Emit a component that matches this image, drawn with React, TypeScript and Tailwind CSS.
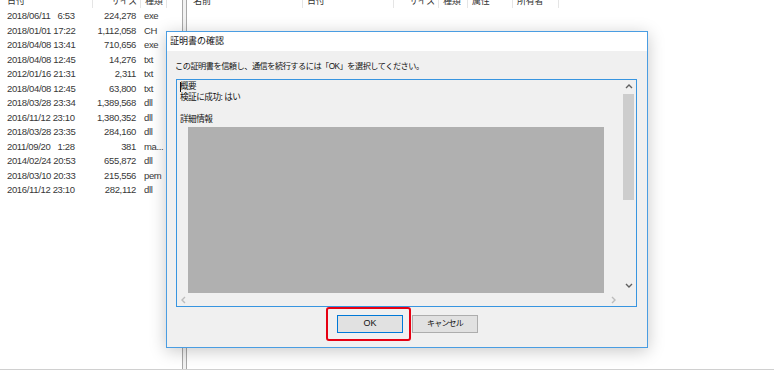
import React from "react";

const font = "font-['Liberation_Sans','Noto_Sans_CJK_JP',sans-serif]";

const files: [string, string, string][] = [
  ["2018/06/11", "6:53", "224,278", "exe"],
  ["2018/01/01", "17:22", "1,112,058", "CH"],
  ["2018/04/08", "13:41", "710,656", "exe"],
  ["2018/04/08", "12:45", "14,276", "txt"],
  ["2012/01/16", "21:31", "2,311", "txt"],
  ["2018/04/08", "12:45", "63,800", "txt"],
  ["2018/03/28", "23:34", "1,389,568", "dll"],
  ["2016/11/12", "23:10", "1,380,352", "dll"],
  ["2018/03/28", "23:35", "284,160", "dll"],
  ["2011/09/20", "1:28", "381", "ma..."],
  ["2014/02/24", "20:53", "655,872", "dll"],
  ["2018/03/10", "20:33", "215,556", "pem"],
  ["2016/11/12", "23:10", "282,112", "dll"],
].map((r) => [r[0] + " " + r[1].padStart(5, "\u2007"), r[2], r[3]] as [string, string, string]);

function HeaderCell({ label, w, right }: { label: string; w: string; right?: boolean }) {
  return (
    <div className={`${w} h-full shrink-0 border-r border-[#e5e5e5] ${right ? "text-right pr-[3px]" : "pl-[4px]"}`}>
      <div className="-mt-[6px] leading-[14px] text-[9px] text-[#333] tracking-[-0.3px]">{label}</div>
    </div>
  );
}

function Chevron({ dir, color }: { dir: "up" | "down" | "left" | "right"; color: string }) {
  const d = {
    up: "M1 5 L4 2 L7 5",
    down: "M1 2 L4 5 L7 2",
    left: "M5 1 L2 4 L5 7",
    right: "M2 1 L5 4 L2 7",
  }[dir];
  return (
    <svg width="8" height="8" viewBox="0 0 8 8">
      <path d={d} fill="none" stroke={color} strokeWidth="1.4" />
    </svg>
  );
}

export default function App() {
  return (
    <div className={`relative w-[774px] h-[370px] overflow-hidden bg-white border-b border-[#d0d0d0] ${font}`}>
      <div className="flex h-full">
        {/* left pane */}
        <div className="w-[182px] shrink-0">
          <div className="flex h-[8px] overflow-hidden">
            <div className="w-[93px] h-full shrink-0 border-r border-[#e5e5e5] pl-[7px]">
              <div className="-mt-[6px] leading-[14px] text-[9px] text-[#333]">日付</div>
            </div>
            <HeaderCell label="サイズ" w="w-[48px]" right />
            <HeaderCell label="種類" w="w-[26px]" />
          </div>
          <div className="pt-[0.5px] text-[9.5px] text-[#383838] tracking-[-0.35px]">
            {files.map(([date, size, type], i) => (
              <div key={i} className="flex h-[14.5px] items-center leading-none">
                <div className="w-[93px] pl-[7px] whitespace-pre">{date}</div>
                <div className="w-[48px] pr-[5px] text-right">{size}</div>
                <div className="w-[26px] pl-[3px] whitespace-nowrap">{type}</div>
              </div>
            ))}
          </div>
        </div>

        {/* splitter */}
        <div className="w-[5px] shrink-0 border-x border-[#a8a8a8] bg-[#f2f2f2]" />

        {/* right pane */}
        <div className="flex-1">
          <div className="flex h-[8px] overflow-hidden">
            <div className="w-[116px] h-full shrink-0 border-r border-[#e5e5e5] pl-[6px]">
              <div className="-mt-[6px] leading-[14px] text-[9px] text-[#333]">名前</div>
            </div>
            <HeaderCell label="日付" w="w-[91px]" />
            <HeaderCell label="サイズ" w="w-[45px]" right />
            <HeaderCell label="種類" w="w-[29px]" />
            <HeaderCell label="属性" w="w-[45px]" />
            <HeaderCell label="所有者" w="w-[46px]" />
          </div>
        </div>
      </div>

      {/* dialog */}
      <div className="absolute left-[166px] top-[31px] w-[482px] h-[317px] flex flex-col border border-[#4a9de2] bg-[#f0f0f0] shadow-[0_3px_16px_rgba(0,0,0,0.22)]">
        <div className="h-[19px] shrink-0 bg-white pl-[3px] flex items-center text-[9px] text-[#111]">証明書の確認</div>
        <div className="flex flex-col pt-[10px]">
          <div className="h-[12px] pl-[8px] leading-[12px] text-[8.2px] tracking-[-0.5px] text-[#111] whitespace-nowrap">
            この証明書を信頼し、通信を続行するには「OK」を選択してください。
          </div>
          <div className="ml-[9px] mt-[6px] w-[461px] h-[228px] border border-[#3895e0] bg-[#f0f0f0] flex flex-col">
            <div className="flex h-[213px]">
              <div className="relative flex-1 flex flex-col pt-[1px] pl-[3px] text-[8.6px] tracking-[-0.5px] text-[#111] leading-[11px]">
                <div className="absolute left-[3px] top-[2px] w-px h-[10px] bg-[#111]" />
                <div>概要</div>
                <div>検証に成功: はい</div>
                <div>&nbsp;</div>
                <div>詳細情報</div>
                <div className="ml-[8px] mt-[1.5px] w-[416px] flex-1 bg-[#b0b0b0]" />
              </div>
              <div className="w-[15px] shrink-0 flex flex-col items-center">
                <div className="h-[14px] flex items-center justify-center">
                  <Chevron dir="up" color="#606060" />
                </div>
                <div className="w-[11px] h-[106px] bg-[#cdcdcd]" />
                <div className="flex-1" />
                <div className="h-[14px] flex items-center justify-center">
                  <Chevron dir="down" color="#606060" />
                </div>
              </div>
            </div>
            <div className="flex-1 flex items-center justify-between pl-[3px] pr-[18px]">
              <Chevron dir="left" color="#bcbcbc" />
              <Chevron dir="right" color="#bcbcbc" />
            </div>
          </div>
          <div className="mt-[8px] flex justify-center gap-[9px] pl-[1px]">
            <div className="relative">
              <div className="w-[66px] h-[18px] border border-[#0078d7] bg-[#e1e1e1] flex items-center justify-center text-[9px] text-[#111]">
                OK
              </div>
              <div className="absolute -left-[11px] -right-[8px] -top-[8px] -bottom-[8px] border-2 border-[#e60012] rounded-[3px]" />
            </div>
            <div className="w-[66px] h-[18px] border border-[#adadad] bg-[#e1e1e1] flex items-center justify-center text-[8px] tracking-[-0.8px] text-[#111]">
              キャンセル
            </div>
          </div>
        </div>
      </div>
    </div>
  );
}
